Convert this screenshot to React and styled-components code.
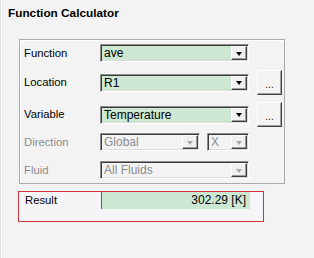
import React from "react";
import styled, { createGlobalStyle } from "styled-components";

const Global = createGlobalStyle`
  html, body { margin: 0; padding: 0; background: #f3f3f3; }
  body { font-family: "Liberation Sans", Arial, sans-serif; font-size: 11px; color: #000; }
`;

const Panel = styled.div`
  width: 314px;
  height: 258px;
  box-sizing: border-box;
  background: #f3f3f3;
  border-left: 1px solid #e4e4e4;
  box-shadow: inset 1px 0 0 #fbfbfb, inset 2px 0 0 #ececec;
  padding: 6px 0 0 7px;
  display: flex;
  flex-direction: column;
`;

const Title = styled.div`
  font-weight: bold;
  font-size: 11.8px;
  line-height: 14px;
  height: 14px;
`;

const GroupBox = styled.div`
  margin: 19px 0 0 11px;
  width: 266px;
  height: 145px;
  box-sizing: border-box;
  border: 1px solid #a9a9a9;
  box-shadow: inset 1px 1px 0 #ffffff;
  padding: 4px 0 0 4px;
  display: flex;
  flex-direction: column;
`;

const Row = styled.div`
  display: flex;
  align-items: center;
  margin-top: ${(p) => p.$top || 0}px;
  height: ${(p) => p.$h || 18}px;
`;

const Label = styled.div`
  width: 76px;
  font-size: 11.3px;
  color: ${(p) => (p.$disabled ? "#8c8c8c" : "#000")};
  line-height: 13px;
`;

const Combo = styled.div`
  width: ${(p) => p.$w}px;
  height: 18px;
  box-sizing: border-box;
  margin-right: ${(p) => p.$mr || 0}px;
  display: flex;
  align-items: stretch;
  background: ${(p) => (p.$disabled ? "#f3f3f3" : "#cde8d2")};
  border-top: 1px solid #8e8e8e;
  border-left: 1px solid #8e8e8e;
  border-right: 1px solid #ffffff;
  border-bottom: 1px solid #ffffff;
  box-shadow: inset 1px 1px 0 #3a3a3a, inset -1px -1px 0 #dcdcdc;
`;

const ComboText = styled.div`
  flex: 1;
  padding-left: 3px;
  padding-top: 1px;
  font-size: 12px;
  line-height: 14px;
  color: ${(p) => (p.$disabled ? "#8c8c8c" : "#000")};
  white-space: nowrap;
  overflow: hidden;
`;

const DropButton = styled.div`
  width: 16px;
  margin: 1px 1px 1px 0;
  box-sizing: border-box;
  background: #f0f0f0;
  border-top: 1px solid #ffffff;
  border-left: 1px solid #ffffff;
  border-right: 1px solid #404040;
  border-bottom: 1px solid #404040;
  box-shadow: inset -1px -1px 0 #9a9a9a;
  display: flex;
  align-items: center;
  justify-content: center;
`;

const Arrow = styled.div`
  width: 0;
  height: 0;
  margin: 1px 1px 0 0;
  border-left: 3.5px solid transparent;
  border-right: 3.5px solid transparent;
  border-top: 4px solid ${(p) => (p.$disabled ? "#a8a8a8" : "#000")};
`;

const DotsButton = styled.div`
  width: 25px;
  height: 25px;
  margin-left: 8px;
  box-sizing: border-box;
  background: #f3f3f3;
  border-top: 1px solid #ffffff;
  border-left: 1px solid #ffffff;
  border-right: 1px solid #404040;
  border-bottom: 1px solid #404040;
  box-shadow: inset -1px -1px 0 #a0a0a0;
  display: flex;
  align-items: flex-end;
  justify-content: center;
  font-size: 10px;
  line-height: 10px;
  padding-bottom: 4px;
  color: #202020;
`;

const ResultBox = styled.div`
  margin: 7px 0 0 10px;
  width: 246px;
  height: 31px;
  box-sizing: border-box;
  border: 1px solid #d3313c;
  background: #f5f5f8;
  padding-left: 6px;
  display: flex;
  align-items: flex-start;
`;

const ResultLabel = styled.div`
  width: 76px;
  height: 17px;
  font-size: 11.3px;
  line-height: 16px;
`;

const ResultField = styled.div`
  width: 149px;
  height: 17px;
  box-sizing: border-box;
  background: #cde8d2;
  border-left: 1px solid #5a5a5a;
  text-align: right;
  padding-right: 4px;
  font-size: 12px;
  line-height: 16px;
`;

function ComboBox({ value, w, disabled, mr }) {
  return (
    <Combo $w={w} $disabled={disabled} $mr={mr}>
      <ComboText $disabled={disabled}>{value}</ComboText>
      <DropButton>
        <Arrow $disabled={disabled} />
      </DropButton>
    </Combo>
  );
}

export default function App() {
  return (
    <>
      <Global />
      <Panel>
        <Title>Function Calculator</Title>
        <GroupBox>
          <Row $h={18}>
            <Label>Function</Label>
            <ComboBox value="ave" w={149} />
          </Row>
          <Row $h={25} $top={8}>
            <Label>Location</Label>
            <ComboBox value="R1" w={149} />
            <DotsButton>...</DotsButton>
          </Row>
          <Row $h={25} $top={7}>
            <Label>Variable</Label>
            <ComboBox value="Temperature" w={149} />
            <DotsButton>...</DotsButton>
          </Row>
          <Row $h={18} $top={6}>
            <Label $disabled>Direction</Label>
            <ComboBox value="Global" w={100} mr={7} disabled />
            <ComboBox value="X" w={42} disabled />
          </Row>
          <Row $h={18} $top={10}>
            <Label $disabled>Fluid</Label>
            <ComboBox value="All Fluids" w={149} disabled />
          </Row>
        </GroupBox>
        <ResultBox>
          <ResultLabel>Result</ResultLabel>
          <ResultField>302.29 [K]</ResultField>
        </ResultBox>
      </Panel>
    </>
  );
}
